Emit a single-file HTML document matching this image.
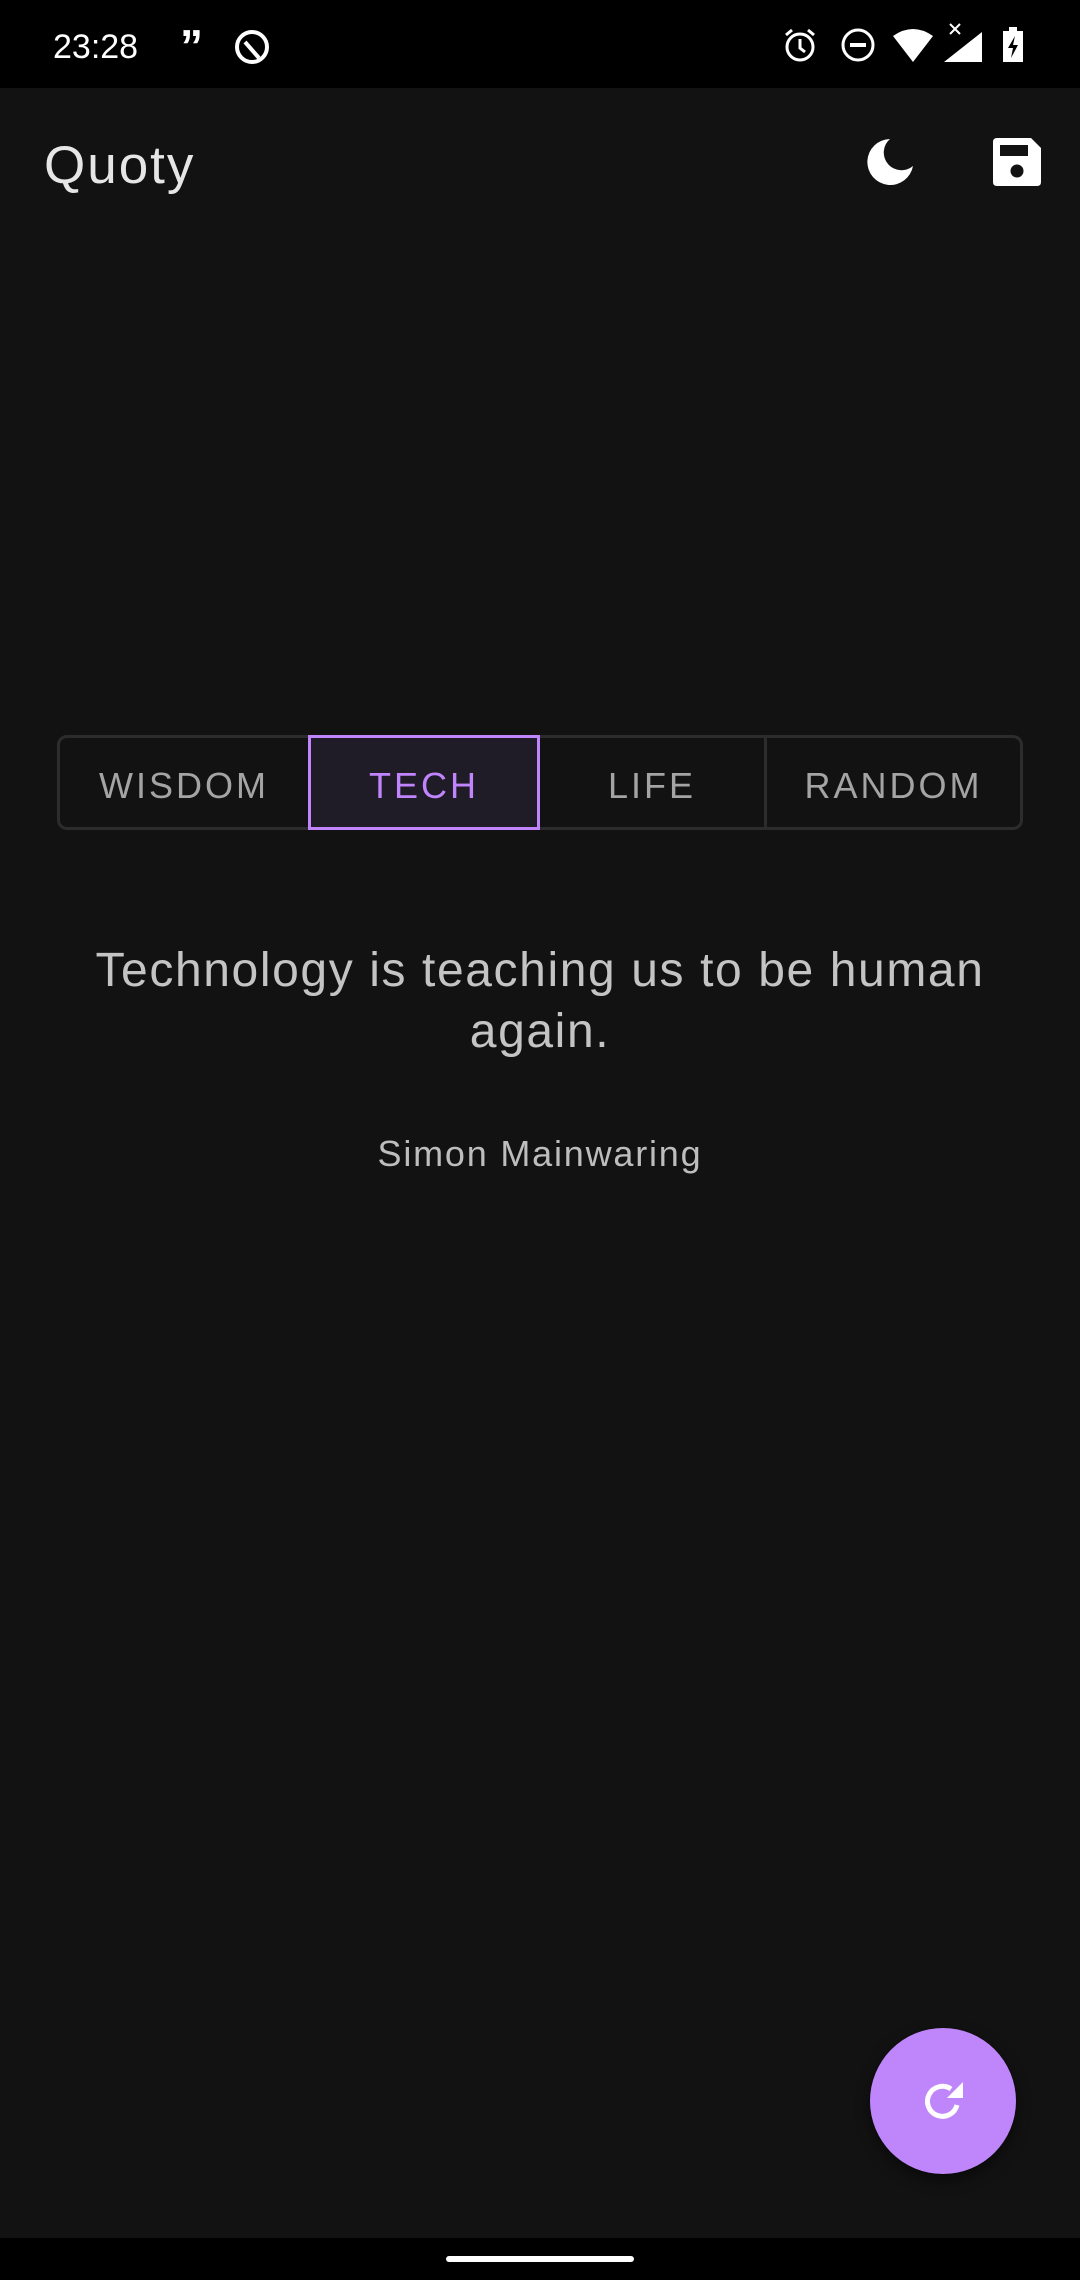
<!DOCTYPE html>
<html><head><meta charset="utf-8"><style>
*{margin:0;padding:0;box-sizing:border-box}
body{width:1080px;height:2280px;background:#121212;position:relative;overflow:hidden;font-family:"Liberation Sans",sans-serif}
.sb{position:absolute;left:0;top:0;width:1080px;height:88px;background:#000}
.abs{position:absolute}
.title{left:44px;top:136px;font-size:53px;color:#e6e6e6;line-height:60px;letter-spacing:2px}
.seg{left:57px;top:735px;width:966px;height:95px;border:3px solid #2c2c2c;border-radius:10px}
.cell{position:absolute;top:3px;height:89px;line-height:89px;text-align:center;font-size:36px;letter-spacing:3px;color:#a4a4a4}
.quote{left:20px;width:1040px;top:940px;text-align:center;font-size:48px;line-height:61px;color:#c4c4c4;letter-spacing:1.6px}
.author{left:0;width:1080px;top:1133px;text-align:center;font-size:36px;color:#bdbdbd;letter-spacing:1.8px}
.fab{left:870px;top:2028px;width:146px;height:146px;border-radius:50%;background:#bf86fc;box-shadow:0 6px 14px rgba(0,0,0,.5)}
.nav{left:0;top:2238px;width:1080px;height:42px;background:#000}
</style></head><body>
<div class="sb"></div>
<div class="abs" style="left:53px;top:27px;font-size:34px;color:#fff;line-height:40px">23:28</div>
<div class="abs" style="left:180px;top:24px;font-size:46px;color:#fff;font-weight:bold;line-height:44px">”</div>
<svg class="abs" style="left:233px;top:28px" width="38" height="38" viewBox="0 0 38 38"><circle cx="19" cy="19" r="15" fill="none" stroke="#fff" stroke-width="4"/><path d="M12 14 L26 30" stroke="#fff" stroke-width="4"/></svg>
<svg class="abs" style="left:782px;top:26px" width="36" height="38" viewBox="0 0 36 38"><circle cx="18" cy="21" r="13" fill="none" stroke="#fff" stroke-width="3"/><path d="M18 13v9l5 4M4 9l6-5M32 9l-6-5" stroke="#fff" stroke-width="3" fill="none"/></svg>
<svg class="abs" style="left:840px;top:27px" width="36" height="36" viewBox="0 0 36 36"><circle cx="18" cy="18" r="15" fill="none" stroke="#fff" stroke-width="3"/><rect x="10" y="16" width="16" height="4" fill="#fff"/></svg>
<svg class="abs" style="left:893px;top:28px" width="40" height="34" viewBox="0 0 40 34"><path d="M0 8 Q20 -6 40 8 L20 34 Z" fill="#fff"/></svg>
<svg class="abs" style="left:942px;top:22px" width="42" height="42" viewBox="0 0 42 42"><path d="M40 10 L40 40 L2 40 Z" fill="#fff"/><path d="M8 2l10 10M18 2L8 12" stroke="#fff" stroke-width="2"/></svg>
<svg class="abs" style="left:1001px;top:27px" width="24" height="36" viewBox="0 0 24 36"><rect x="2" y="4" width="20" height="31" fill="#fff"/><rect x="8" y="0" width="8" height="5" fill="#fff"/><path d="M14 9 L7 21 H12 L10 31 L17 18 H12 Z" fill="#000"/></svg>

<div class="abs title">Quoty</div>
<svg class="abs" style="left:866px;top:138px" width="48" height="48" viewBox="0 0 48 48"><path d="M24 1 A23 23 0 1 0 47 28 A17 17 0 1 1 24 1 Z" fill="#fff"/></svg>
<svg class="abs" style="left:993px;top:138px" width="48" height="48" viewBox="0 0 48 48"><path d="M4 0 H38 L48 10 V44 Q48 48 44 48 H4 Q0 48 0 44 V4 Q0 0 4 0 Z" fill="#fff"/><rect x="7" y="7" width="28" height="11" fill="#121212"/><circle cx="24" cy="33" r="6.5" fill="#121212"/></svg>

<div class="abs seg">
<div class="cell" style="left:0;width:248px">WISDOM</div>
<div class="cell" style="left:248px;width:232px;top:-3px;height:95px;line-height:95px;border:3px solid #c084fc;background:#1f1b27;color:#c084fc">TECH</div>
<div class="cell" style="left:480px;width:224px">LIFE</div>
<div style="position:absolute;left:704px;top:0;width:3px;height:89px;background:#2c2c2c"></div>
<div class="cell" style="left:707px;width:253px">RANDOM</div>
</div>

<div class="abs quote">Technology is teaching us to be human<br>again.</div>
<div class="abs author">Simon Mainwaring</div>

<div class="abs fab"><svg style="position:absolute;left:51px;top:51px" width="44" height="44" viewBox="0 0 44 44"><path d="M36 26 A15 15 0 1 1 30 10" fill="none" stroke="#fff" stroke-width="5"/><path d="M42 3 V19 H26 Z" fill="#fff"/></svg></div>

<div class="abs nav"><div style="position:absolute;left:446px;top:18px;width:188px;height:6px;border-radius:3px;background:#fff"></div></div>
</body></html>
